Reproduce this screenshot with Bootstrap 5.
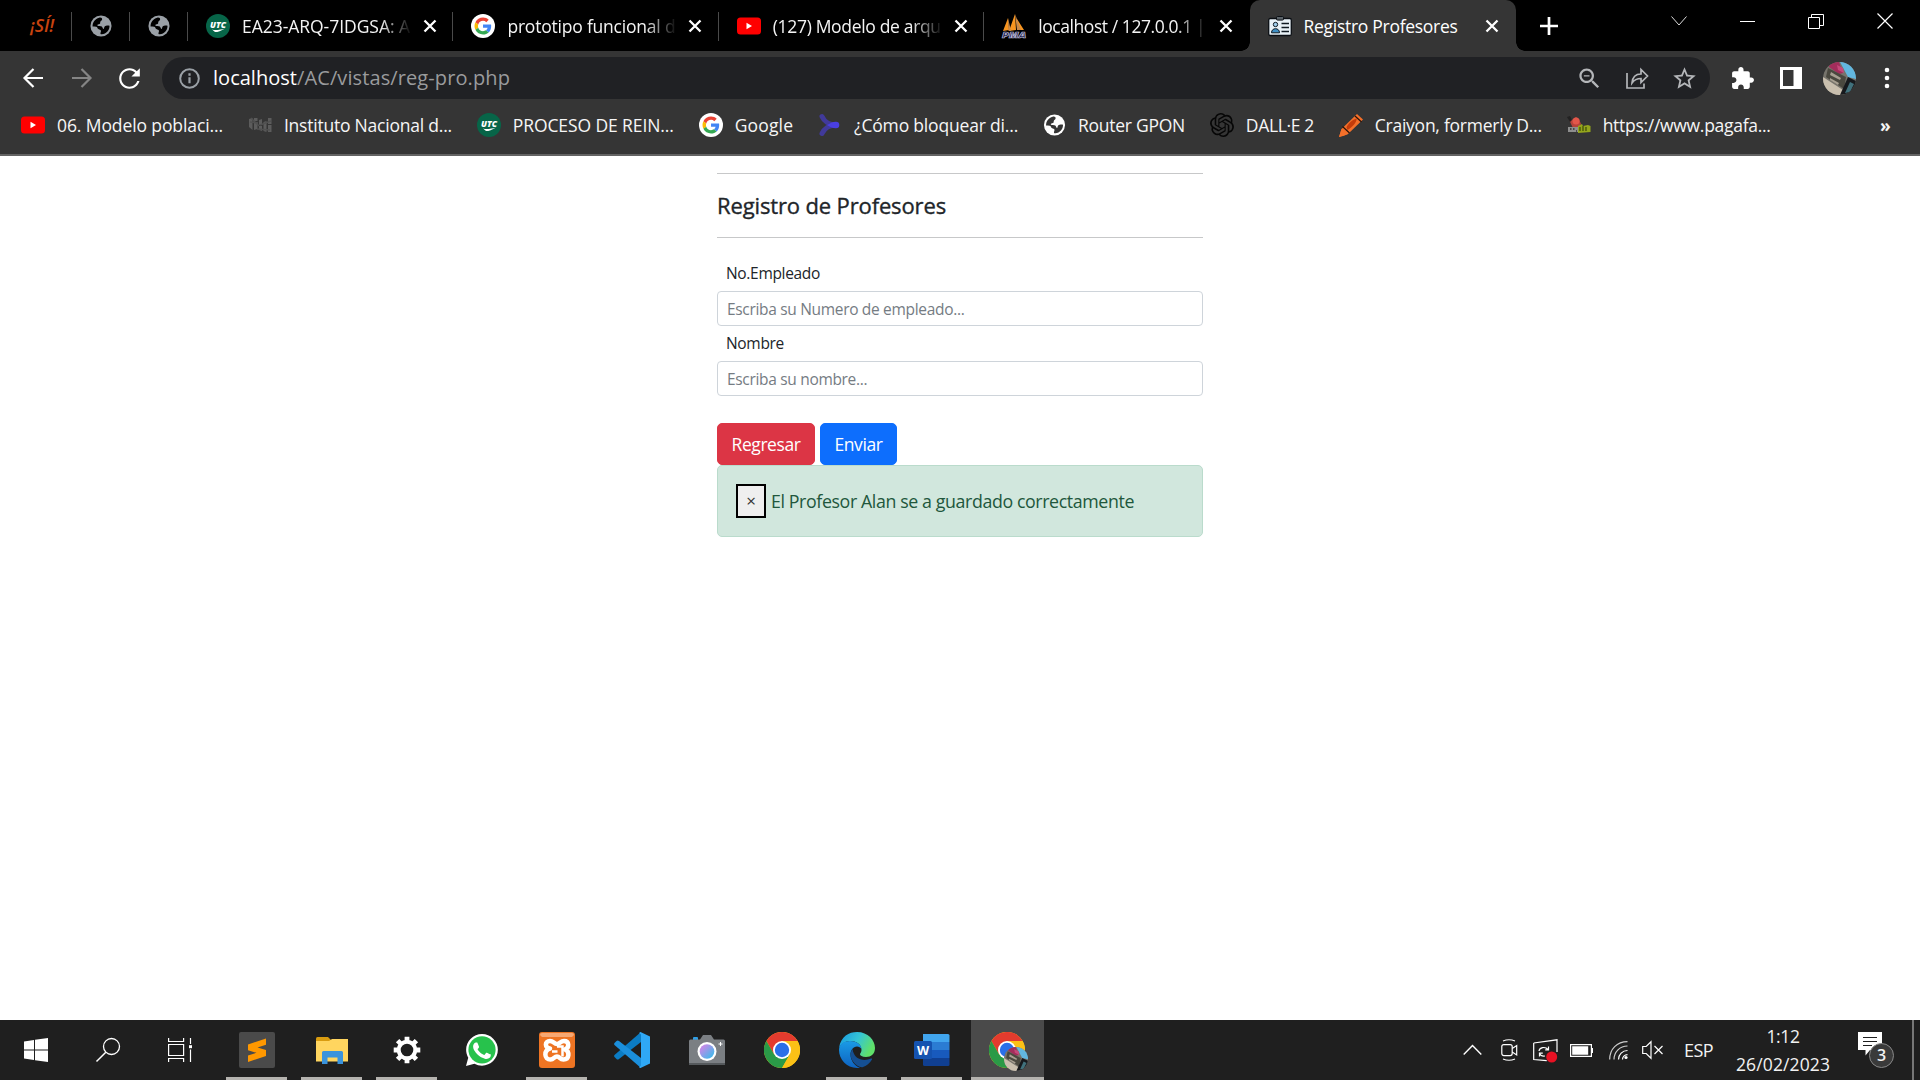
<!DOCTYPE html>
<html lang="es">
<head>
<meta charset="utf-8">
<meta name="viewport" content="width=device-width, initial-scale=1">
<title>Registro Profesores</title>
<link rel="stylesheet" href="https://cdn.jsdelivr.net/npm/bootstrap@5.3.0/dist/css/bootstrap.min.css">
<style>
html{font-size:18px}
body{font-family:"Open Sans","Noto Sans",sans-serif;width:1920px;height:1080px;overflow:hidden;background:#fff}
svg{display:block;flex:none;overflow:visible}
.fit{white-space:nowrap;display:block;flex:none}
/* browser window */
.strip{height:51px;background:#000;color:#f4f4f4;font-size:17.5px}
.pin,.tab-item{height:51px;position:relative;flex:none}
.tab-item{width:265.4px;padding-left:18px}
.pin::after,.tab-item::after{content:"";position:absolute;right:0;top:12px;width:1px;height:29px;background:#4a4a4a}
.tab-item.last::after,.tab-item.current::after{display:none}
.tab-item.current{width:266.500px;background:#353535;border-radius:10px 10px 0 0;color:#fff}
.tab-item.current::before,.curve{content:"";position:absolute;left:-9px;bottom:0;width:9px;height:9px;background:radial-gradient(circle at 0 0,transparent 8.5px,#353535 9px)}
.curve{left:auto;right:-9px;transform:scaleX(-1)}
.clip{width:168px;overflow:hidden;margin:0 13px 0 11px;line-height:30px}
.fade-end{-webkit-mask-image:linear-gradient(90deg,#000 138px,transparent 170px);mask-image:linear-gradient(90deg,#000 138px,transparent 170px)}
.si{font-weight:600;font-style:italic;color:#c8430f;font-size:18px}
.tools{height:54px;background:#353535;padding:0 19px 0 22px}
.omni{width:1548px;height:42px;margin-left:21px;border-radius:21px;background:#202124;padding:0 12px 0 17px}
.url{font-size:20px;line-height:30px;color:#9a9b9d}
.host{color:#fff}
.marks{height:51px;background:#353535;border-bottom:2px solid #636363;padding:0 0 9px 21px;color:#f6f6f6;font-size:17.5px;line-height:26px}
.marks .bm{margin-right:24.900px}
.marks .bm svg{margin-right:12px}
/* page */
.page{height:864px}
.form-col{width:486px}
.form-col hr{margin:17px 0;opacity:.25}
.form-col .head{font-size:22px;font-weight:500;-webkit-text-stroke:.35px #212529;line-height:27px;margin:18px 0 0}
.form-col .form-lab{font-size:15.5px;line-height:24px;padding-left:9px;color:#212529}
.form-col .form-control{height:35px;min-height:0;padding:4px 9px;border-radius:4px;font-size:15.5px;letter-spacing:-.32px;line-height:24px;border-color:#ced4da}
.form-col .form-control::placeholder{color:#757c83}
.form-col .btn{height:42px;font-size:17.5px;line-height:24px;padding:8px 0;border-radius:5px;display:flex;justify-content:center}
.form-col .alert{height:72px;padding:0 18px;border-radius:5px;font-size:17.800px;background:#d1e7dd;border:1px solid #badbcc;color:#21573c}
.dismiss{width:30px;height:34px;border:2px solid #000;background:#efefef;color:#333;padding:0;font-size:17px;line-height:26px}
/* taskbar */
.task{height:60px;background:#1f1f1f;color:#f2f2f2}
.cell{width:72px;height:60px;flex:none}
.app{width:75px;height:60px;flex:none;position:relative}
.app.open::after{content:"";position:absolute;left:7px;right:7px;bottom:0;height:3px;background:#b5b3af}
.app.front{width:73px;margin-left:1.500px;background:#4a4a4a}
.app.front::after{left:0;right:0}
.app.front .avatar{position:absolute;left:33px;top:27px}
.first-app{margin-left:3px}
.tray{height:60px;padding-right:6px}
.tray>*{flex:none}
.clock{font-size:17.500px;line-height:28px;width:94px;margin-left:23px}
.esp{font-size:18px;margin-left:21px}
.notif{position:relative;width:38px;height:36px;margin-left:28px}
.count{position:absolute;left:11px;top:11px;width:25px;height:25px;border:1px solid #888;border-radius:50%;background:#3a3a3a;font-size:16px;font-weight:600;line-height:23px;text-align:center}
.peek{width:2px;height:60px;background:#777;margin-left:16px}
</style>
<script src="https://cdn.jsdelivr.net/npm/bootstrap@5.3.0/dist/js/bootstrap.bundle.min.js"></script>
</head>
<body class="d-flex flex-column">
<svg width="0" height="0" class="position-absolute" aria-hidden="true">
<defs>
<symbol id="globe" viewBox="0 0 24 24"><circle cx="12" cy="12" r="11.500" fill="currentColor"/><path fill="var(--hole)" d="M2.800 12.500C2.600 8 5.500 4 10 2.900c2.500-.4 3.400.8 3.200 2.100-.2 1.400-1.700 1.300-2 2.500-.3 1.300.4 1.600-1 2.300-1 .5-2.300.3-2.200 1.500.1.900 1.100.8 2.200.8 2.600.1 3.300.8 3.600 2.200.3 1.300 1.500 1 1.600-.2.100-1.500.8-2.300 2.200-2.500 1.300-.2 2.500-.2 3.700.1.100 4.800-3.300 8.900-8.500 9.400-1.300 0-1.600-.8-1.300-1.800.4-1.300.8-1.700.2-2.600-.7-1-2.600-.9-3.300-2-.5-.8-.2-1.700-1.700-2-1.500-.2-2.700-.1-3.900-.2z"/></symbol>
<symbol id="utc" viewBox="0 0 24 24"><circle cx="12" cy="12" r="12" fill="#076548"/><text x="4" y="13.500" font-family="Open Sans,sans-serif" font-size="9.500" font-weight="800" font-style="italic" fill="#fff" textLength="16" lengthAdjust="spacingAndGlyphs">UTC</text><path d="M6 15.500c3 1 8 .5 13-1-4 2.500-8 3.800-10 3.600z" fill="#fff"/></symbol>
<symbol id="goog" viewBox="0 0 24 24"><circle cx="12" cy="12" r="12" fill="#fff"/><g transform="translate(3.500 3.500) scale(.355)"><path fill="#EA4335" d="M24 9.500c3.540 0 6.710 1.220 9.210 3.600l6.850-6.850C35.900 2.380 30.470 0 24 0 14.620 0 6.510 5.380 2.560 13.220l7.980 6.190C12.430 13.720 17.740 9.500 24 9.500z"/><path fill="#4285F4" d="M46.980 24.550c0-1.570-.15-3.090-.38-4.550H24v9.020h12.940c-.58 2.960-2.260 5.480-4.780 7.180l7.730 6c4.510-4.180 7.090-10.360 7.090-17.650z"/><path fill="#FBBC05" d="M10.530 28.590c-.48-1.450-.76-2.990-.76-4.590s.27-3.140.76-4.590l-7.980-6.190C.92 16.460 0 20.120 0 24c0 3.880.92 7.540 2.560 10.780l7.970-6.190z"/><path fill="#34A853" d="M24 48c6.480 0 11.930-2.130 15.890-5.810l-7.730-6c-2.150 1.450-4.920 2.300-8.160 2.300-6.260 0-11.570-4.220-13.470-9.910l-7.980 6.190C6.510 42.620 14.620 48 24 48z"/></g></symbol>
<symbol id="yt" viewBox="0 0 24 24"><rect y="3.500" width="24" height="17" rx="3.500" fill="#f00"/><path d="M9.500 8.800v6.400l5.500-3.200z" fill="#fff"/></symbol>
<symbol id="shut" viewBox="0 0 14 14"><path d="M1.500 1.500l11 11m0-11l-11 11" stroke="#fff" stroke-width="2.300"/></symbol>
<symbol id="chrome" viewBox="0 0 36 36"><circle cx="18" cy="18" r="18" fill="#fbc116"/><path d="M18 9H33.600A18 18 0 0 0 2.400 9L10.200 22.500z" fill="#e33b2e"/><path d="M2.400 9A18 18 0 0 0 18 36L25.800 22.500H10.200z" fill="#2a9a47"/><path d="M33.600 9H18l7.800 13.500L18 36A18 18 0 0 0 33.600 9z" fill="#fbc116"/><circle cx="18" cy="18" r="9" fill="#fff"/><circle cx="18" cy="18" r="7.200" fill="#2a6fe8"/></symbol>
<symbol id="face" viewBox="0 0 33 33"><clipPath id="fc"><circle cx="16.500" cy="16.500" r="16.500"/></clipPath><g clip-path="url(#fc)"><path fill="#77746c" d="M0 0h33v33H0z"/><path fill="#62b7df" d="M17 0h16v17l-8-2z"/><path fill="#a32d5b" d="M7 0h9l4 11-4 1-10-7z"/><path fill="#c6487a" d="M14 3l6 3 1 5-6-3z"/><path fill="#4a483f" d="M5 6l18 9-2 12L3 15z"/><path fill="#a79f91" d="M8 10l10 6-1 2-10-5zM7 16l9 5-1 2-8-5z"/><path fill="#c9bfae" d="M0 15l20 13-2 5H4L0 25z"/><path fill="#17191d" d="M25 15l8 4v12l-16 2z"/><path fill="#41717c" d="M27 20l4 2-4 8-5 1z"/></g></symbol>
</defs>
</svg>

<header>
<div class="strip d-flex align-items-center" style="--hole:#000">
  <div class="pin d-flex align-items-center" style="width:72px;padding-left:30px"><span class="fit si" data-w="24">¡SÍ!</span></div>
  <div class="pin d-flex align-items-center justify-content-center" style="width:58px;color:#9aa0a6"><svg width="22" height="22"><use href="#globe"/></svg></div>
  <div class="pin d-flex align-items-center justify-content-center" style="width:58px;color:#9aa0a6"><svg width="22" height="22"><use href="#globe"/></svg></div>
  <div class="tab-item d-flex align-items-center"><svg width="24" height="24"><use href="#utc"/></svg><div class="clip fade-end" style="margin-left:12px"><span class="fit" data-w="168">EA23-ARQ-7IDGSA: A</span></div><svg width="14" height="14"><use href="#shut"/></svg></div>
  <div class="tab-item d-flex align-items-center"><svg width="24" height="24"><use href="#goog"/></svg><div class="clip fade-end" style="margin-left:12px"><span class="fit" data-w="168">prototipo funcional d</span></div><svg width="14" height="14"><use href="#shut"/></svg></div>
  <div class="tab-item d-flex align-items-center"><svg width="24" height="24"><use href="#yt"/></svg><div class="clip fade-end" style="margin-left:12px"><span class="fit" data-w="168">(127) Modelo de arqu</span></div><svg width="14" height="14"><use href="#shut"/></svg></div>
  <div class="tab-item last d-flex align-items-center"><svg width="24" height="24" viewBox="0 0 24 24"><path d="M1 17L6 4l1 12zM7 17L13 0l1 16zM15 16V5l7 11z" fill="#f79520"/><path d="M6 4l3 13H6.500zM13 0l6 16h-4z" fill="#c98a4a"/><text x="0" y="23.500" font-family="Open Sans,sans-serif" font-size="9" font-weight="800" font-style="italic" fill="#20204a" stroke="#b9b9d6" stroke-width=".7" textLength="24" lengthAdjust="spacingAndGlyphs">PMA</text></svg><div class="clip fade-end" style="margin-left:12px"><span class="fit" data-w="167">localhost / 127.0.0.1 |</span></div><svg width="14" height="14"><use href="#shut"/></svg></div>
  <div class="tab-item current d-flex align-items-center"><svg width="24" height="24" viewBox="0 0 24 24"><rect x=".7" y="4.500" width="22.600" height="17" rx="1.500" fill="#e9f2f7" stroke="#0b0f14" stroke-width="1.300"/><rect x="8.500" y="2.500" width="7" height="3.600" rx="1" fill="#5a6268" stroke="#0b0f14"/><circle cx="7.500" cy="10.500" r="2.200" fill="#9fcdea" stroke="#101a22"/><path d="M3.500 18.800c0-5.500 8-5.500 8 0z" fill="#3f8fc4" stroke="#101a22"/><path d="M13.500 9.500h7.500M13.500 13.500h7.500M13.500 17.500h7.500" stroke="#101a22" stroke-width="1.500"/></svg><div class="clip" style="margin-left:12px"><span class="fit" data-w="154">Registro Profesores</span></div><svg width="14" height="14"><use href="#shut"/></svg><span class="curve"></span></div>
  <svg width="18" height="18" viewBox="0 0 18 18" style="margin-left:24px"><path d="M9 0v18M0 9h18" stroke="#fff" stroke-width="2.700"/></svg>
  <div class="d-flex align-items-center ms-auto mb-2" style="padding-right:27px;gap:53px">
    <svg width="16" height="18" viewBox="0 0 16 18"><path d="M.5 4.500L8 13l7.500-8.500" fill="none" stroke="#ddd"/></svg>
    <svg width="15" height="18" viewBox="0 0 15 18"><path d="M0 9.500h15" stroke="#fff"/></svg>
    <svg width="16" height="18" viewBox="0 0 16 18"><path d="M.5 5.500h11v11h-11zM3.500 5.500v-3h12v11h-4" fill="none" stroke="#fff"/></svg>
    <svg width="16" height="18" viewBox="0 0 16 18"><path d="M.5 1.500l15 15m0-15l-15 15" stroke="#fff" stroke-width="1.200"/></svg>
  </div>
</div>

<div class="tools d-flex align-items-center">
  <svg width="22" height="22" viewBox="0 0 22 22"><path d="M21 11H3M11.500 2L2.500 11l9 9" fill="none" stroke="#fff" stroke-width="2.200"/></svg>
  <svg width="22" height="22" viewBox="0 0 22 22" style="margin-left:27px"><path d="M1 11h18M10.500 2l9 9-9 9" fill="none" stroke="#858585" stroke-width="2.200"/></svg>
  <svg width="31" height="31" viewBox="0 0 24 24" style="margin-left:21px;margin-right:-4px"><path fill="#fff" d="M17.650 6.350C16.200 4.900 14.210 4 12 4c-4.420 0-7.990 3.580-7.990 8s3.570 8 7.990 8c3.730 0 6.840-2.550 7.730-6h-1.780c-.82 2.500-3.140 4.300-5.950 4.300-3.500 0-6.300-2.800-6.300-6.300s2.800-6.300 6.300-6.300c1.700 0 3.300.7 4.400 1.880L13.500 10.500H20V4z"/></svg>
  <div class="omni d-flex align-items-center">
    <svg width="21" height="21" viewBox="0 0 21 21"><circle cx="10.500" cy="10.500" r="9.300" fill="none" stroke="#9aa0a6" stroke-width="2"/><path d="M10.500 9.300v6M10.500 5.300v2.400" stroke="#9aa0a6" stroke-width="2.200"/></svg>
    <span class="fit url host" data-w="84" style="margin-left:13px">localhost</span><span class="fit url" data-w="213">/AC/vistas/reg-pro.php</span>
    <svg class="ms-auto" width="27" height="27" viewBox="0 0 24 24"><path fill="#b4b6b9" d="M15.500 14h-.79l-.28-.27C15.410 12.590 16 11.110 16 9.500 16 5.910 13.090 3 9.500 3S3 5.910 3 9.500 5.910 16 9.500 16c1.610 0 3.090-.59 4.230-1.570l.27.28v.79l5 4.990L20.490 19l-4.990-5zm-6 0C7.010 14 5 11.990 5 9.500S7.010 5 9.500 5 14 7.010 14 9.500 11.990 14 9.500 14zM7 9h5v1.300H7z"/></svg>
    <svg width="23" height="22" viewBox="0 0 23 22" style="margin-left:23px"><path d="M1 6v15h17v-4.500M6 16c.5-6 4-9 9-9V2.500l6.500 6.500-6.500 6.500V11.500c-4 0-6.500 1-9 4.500z" fill="none" stroke="#b4b6b9" stroke-width="1.700"/></svg>
    <svg width="27" height="27" viewBox="0 0 24 24" style="margin-left:22px"><path fill="#b4b6b9" d="M22 9.240l-7.190-.62L12 2 9.190 8.630 2 9.240l5.460 4.730L5.820 21 12 17.270 18.180 21l-1.630-7.030L22 9.240zM12 15.400l-3.760 2.270 1-4.280-3.320-2.880 4.380-.38L12 6.100l1.710 4.040 4.380.38-3.320 2.880 1 4.280L12 15.400z"/></svg>
  </div>
  <svg width="25" height="25" viewBox="0 0 24 24" style="margin-left:20px"><path fill="#fff" d="M20.500 11H19V7c0-1.100-.9-2-2-2h-4V3.500C13 2.120 11.880 1 10.500 1S8 2.120 8 3.500V5H4c-1.100 0-1.990.9-1.990 2v3.800H3.500c1.490 0 2.700 1.210 2.700 2.700s-1.210 2.700-2.700 2.700H2V20c0 1.100.9 2 2 2h3.800v-1.500c0-1.490 1.210-2.700 2.700-2.700 1.490 0 2.700 1.210 2.700 2.700V22H17c1.100 0 2-.9 2-2v-4h1.500c1.380 0 2.500-1.120 2.500-2.500S21.880 11 20.500 11z"/></svg>
  <svg width="22" height="22" viewBox="0 0 22 22" style="margin-left:25px"><path fill="#fff" fill-rule="evenodd" d="M0 0h22v22H0zM3 3v16h10.500V3z"/></svg>
  <svg width="33" height="33" style="margin-left:21px"><use href="#face"/></svg>
  <svg width="6" height="22" viewBox="0 0 6 22" style="margin-left:28px"><g fill="#fff"><circle cx="3" cy="3" r="2.300"/><circle cx="3" cy="11" r="2.300"/><circle cx="3" cy="19" r="2.300"/></g></svg>
</div>

<nav class="marks d-flex align-items-center" style="--hole:#353535">
  <div class="bm d-flex align-items-center"><svg width="24" height="24"><use href="#yt"/></svg><span class="fit" data-w="166">06. Modelo poblaci...</span></div>
  <div class="bm d-flex align-items-center"><svg width="24" height="24" viewBox="0 0 24 24"><path d="M1 6l3.500-1v12L1 14zM6 5h3.500v3H6zM6 9h3.500v7L6 17zM11 7l3-1v5l-3 1zM11 13h3v5l-3-1zM15.500 9l3-1v11l-3-1zM20 5h3.500v6H20zM20 12h3.500v7H20z" fill="#5c5c5c"/><path d="M2 9l8 1M9 16l13 1M12 12l11-4M3 5l8 8" stroke="#505050" stroke-width="1.500"/></svg><span class="fit" data-w="168">Instituto Nacional d...</span></div>
  <div class="bm d-flex align-items-center"><svg width="24" height="24"><use href="#utc"/></svg><span class="fit" data-w="161">PROCESO DE REIN...</span></div>
  <div class="bm d-flex align-items-center"><svg width="24" height="24"><use href="#goog"/></svg><span class="fit" data-w="58.500">Google</span></div>
  <div class="bm d-flex align-items-center"><svg width="24" height="24" viewBox="0 0 24 24"><path d="M4 3.500c2 4.500 7 8.500 14 8.500-7 0-12 4-14 8.500" fill="none" stroke="#413a9a" stroke-width="5" stroke-linecap="round"/><path d="M9 12c3-1.500 5-3.300 9-3.300a3.300 3.300 0 0 1 0 6.600c-4 0-6-1.800-9-3.300z" fill="#4a3fe0"/></svg><span class="fit" data-w="164">¿Cómo bloquear di...</span></div>
  <div class="bm d-flex align-items-center"><svg width="23" height="22" class="text-white"><use href="#globe"/></svg><span class="fit" data-w="107">Router GPON</span></div>
  <div class="bm d-flex align-items-center"><svg width="24" height="24" viewBox="0 0 24 24"><path fill="#060606" d="M22.2819 9.8211a5.9847 5.9847 0 0 0-.5157-4.9108 6.0462 6.0462 0 0 0-6.5098-2.9A6.0651 6.0651 0 0 0 4.9807 4.1818a5.9847 5.9847 0 0 0-3.9977 2.9 6.0462 6.0462 0 0 0 .7427 7.0966 5.98 5.98 0 0 0 .511 4.9107 6.051 6.051 0 0 0 6.5146 2.9001A5.9847 5.9847 0 0 0 13.2599 24a6.0557 6.0557 0 0 0 5.7718-4.2058 5.9894 5.9894 0 0 0 3.9977-2.9001 6.0557 6.0557 0 0 0-.7475-7.0729zm-9.022 12.6081a4.4755 4.4755 0 0 1-2.8764-1.0408l.1419-.0804 4.7783-2.7582a.7948.7948 0 0 0 .3927-.6813v-6.7369l2.02 1.1686a.071.071 0 0 1 .038.052v5.5826a4.504 4.504 0 0 1-4.4945 4.4944zm-9.6607-4.1254a4.4708 4.4708 0 0 1-.5346-3.0137l.142.0852 4.783 2.7582a.7712.7712 0 0 0 .7806 0l5.8428-3.3685v2.3324a.0804.0804 0 0 1-.0332.0615L9.74 19.9502a4.4992 4.4992 0 0 1-6.1408-1.6464zM2.3408 7.8956a4.485 4.485 0 0 1 2.3655-1.9728V11.6a.7664.7664 0 0 0 .3879.6765l5.8144 3.3543-2.0201 1.1685a.0757.0757 0 0 1-.071 0l-4.8303-2.7865A4.504 4.504 0 0 1 2.3408 7.872zm16.5963 3.8558L13.1038 8.364 15.1192 7.2a.0757.0757 0 0 1 .071 0l4.8303 2.7913a4.4944 4.4944 0 0 1-.6765 8.1042v-5.6772a.79.79 0 0 0-.407-.667zm2.0107-3.0231l-.142-.0852-4.7735-2.7818a.7759.7759 0 0 0-.7854 0L9.409 9.2297V6.8974a.0662.0662 0 0 1 .0284-.0615l4.8303-2.7866a4.4992 4.4992 0 0 1 6.6802 4.66zM8.3065 12.863l-2.02-1.1638a.0804.0804 0 0 1-.038-.0567V6.0742a4.4992 4.4992 0 0 1 7.3757-3.4537l-.142.0805L8.704 5.459a.7948.7948 0 0 0-.3927.6813zm1.0976-2.3654l2.602-1.4998 2.6069 1.4998v2.9994l-2.5974 1.4997-2.6067-1.4997Z"/></svg><span class="fit" data-w="68">DALL·E 2</span></div>
  <div class="bm d-flex align-items-center"><svg width="24" height="24" viewBox="0 0 24 24"><path d="M0 24l2.500-8L18 1l6 5.500L9 21z" fill="#f4702a"/><path d="M2.500 16L9 21l-4 1.800L0 24z" fill="#f4702a"/><path d="M7.500 14.500C8 11.500 14 6 17.500 5.500c1 3-5 9.500-9 11.500z" fill="#c43c0b"/><path d="M3.500 13.500L10.500 20M16 3l6.500 6" stroke="#2a1207" stroke-width="1.200"/></svg><span class="fit" data-w="167">Craiyon, formerly D...</span></div>
  <div class="bm d-flex align-items-center"><svg width="24" height="24" viewBox="0 0 24 24"><path d="M1 4l4 3 4-3 3 2 2 5-3 5-5-1-2-4z" fill="#b8423a"/><path d="M0 4l3-1 2 4-2 2zM6 7l3 1-1 3z" fill="#222"/><circle cx="9" cy="8" r="3.500" fill="#e2574a"/><path d="M1 14h10v5H1z" fill="#8e8e8e"/><path d="M3 16h1.500M6 16h1.500M9 18h1" stroke="#333" stroke-width="1.500"/><path d="M11 13l4-2 1 2 5-1 2.500 1v6L11 20z" fill="#94a51c"/><path d="M13 14v4M16 13v5M19 14v4" stroke="#41500b" stroke-width="1.300"/></svg><span class="fit" data-w="168">https://www.pagafa...</span></div>
  <span class="fit ms-auto fw-bold" data-w="11" style="margin-right:29px">»</span>
</nav>
</header>

<main class="page">
<form class="form-col mx-auto">
  <hr>
  <h5 class="head"><span class="fit" data-w="229">Registro de Profesores</span></h5>
  <hr style="margin:18px 0 23px">
  <label class="form-lab d-block" for="emp"><span class="fit" data-w="94">No.Empleado</span></label>
  <input class="form-control" id="emp" placeholder="Escriba su Numero de empleado..." style="margin-top:6px">
  <label class="form-lab d-block" for="nom" style="margin-top:5px"><span class="fit" data-w="58">Nombre</span></label>
  <input class="form-control" id="nom" placeholder="Escriba su nombre..." style="margin-top:6px">
  <div class="d-flex" style="margin-top:27px;gap:5px">
    <a class="btn btn-danger" style="width:98px"><span class="fit" data-w="69">Regresar</span></a>
    <button type="button" class="btn btn-primary" style="width:77px"><span class="fit" data-w="48">Enviar</span></button>
  </div>
  <div class="alert alert-success d-flex align-items-center mb-0" role="alert">
    <button type="button" class="dismiss">×</button>
    <span class="fit" data-w="363" style="margin-left:5px">El Profesor Alan se a guardado correctamente</span>
  </div>
</form>
</main>

<footer class="task d-flex align-items-center">
  <div class="cell d-flex align-items-center justify-content-center"><svg width="24" height="24" viewBox="0 0 24 24"><path fill="#fff" d="M0 3.400L10 2v9.500H0zM11 1.800L24 0v11.500H11zM0 12.500h10V22L0 20.600zM11 12.500h13V24L11 22.200z"/></svg></div>
  <div class="cell d-flex align-items-center justify-content-center"><svg width="24" height="24" viewBox="0 0 24 24"><circle cx="15.500" cy="8.500" r="8" fill="none" stroke="#fff" stroke-width="1.300"/><path d="M9.800 14.200L.5 23.500" stroke="#fff" stroke-width="1.500"/></svg></div>
  <div class="cell d-flex align-items-center justify-content-center"><svg width="24" height="24" viewBox="0 0 24 24"><path d="M.6 6.500h15v11H.6zM.6 0v3.500h15V0M.6 24v-3.500h15V24M22.500 0v6M22.500 11.500V24" fill="none" stroke="#fff" stroke-width="1.200"/><path fill="#fff" d="M21 7.200h3v3h-3z"/></svg></div>
  <div class="app open first-app d-flex align-items-center justify-content-center"><svg width="36" height="36" viewBox="0 0 36 36"><rect width="36" height="36" rx="2" fill="#4a4a4a"/><path d="M9 12.500L27 6.500v6.300L18.500 15.500 27 18v6L9 30v-6.500l8.500-2.700L9 18.300z" fill="#ff9800"/></svg></div>
  <div class="app open d-flex align-items-center justify-content-center"><svg width="32" height="27" viewBox="0 0 32 27"><path d="M0 1.500Q0 0 1.500 0H12l3 3v5H0z" fill="#d99c10"/><path d="M0 4h13l3-2h16v22.500H0z" fill="#ffd55f"/><path d="M6 27V15.500q0-1.500 1.500-1.500h18q1.500 0 1.500 1.500V27h-5.500v-6.500h-10V27z" fill="#3a93dc"/></svg></div>
  <div class="app open d-flex align-items-center justify-content-center"><svg width="28" height="28" viewBox="0 0 28 28"><circle cx="14" cy="14" r="8.300" fill="none" stroke="#fff" stroke-width="4"/><g stroke="#fff" stroke-width="4.800"><path id="tooth" d="M14 .7V5M14 23v4.300"/><use href="#tooth" transform="rotate(45 14 14)"/><use href="#tooth" transform="rotate(90 14 14)"/><use href="#tooth" transform="rotate(135 14 14)"/></g></svg></div>
  <div class="app d-flex align-items-center justify-content-center"><svg width="32" height="32" viewBox="0 0 16 16"><path fill="#fff" d="M13.601 2.326A7.854 7.854 0 0 0 7.994 0C3.627 0 .068 3.558.064 7.926c0 1.399.366 2.760 1.057 3.965L0 16l4.204-1.102a7.933 7.933 0 0 0 3.790.965h.004c4.368 0 7.926-3.558 7.930-7.930A7.898 7.898 0 0 0 13.600 2.326z"/><circle cx="8" cy="7.930" r="6.800" fill="#27c24c"/><path fill="#fff" transform="translate(-.8 -.8) scale(1.100)" d="M11.594 9.900c-.197-.099-1.170-.578-1.353-.646-.182-.065-.315-.099-.445.099-.133.197-.513.646-.627.775-.114.133-.232.148-.43.05-.197-.1-.836-.308-1.592-.985-.59-.525-.985-1.175-1.103-1.372-.114-.198-.011-.304.088-.403.087-.088.197-.232.296-.346.1-.114.133-.198.198-.33.065-.134.034-.248-.015-.347-.05-.099-.445-1.076-.612-1.470-.16-.389-.323-.335-.445-.34-.114-.007-.247-.007-.38-.007a.729.729 0 0 0-.529.247c-.182.198-.691.677-.691 1.654 0 .977.710 1.916.810 2.049.098.133 1.394 2.132 3.383 2.992.470.205.840.326 1.129.418.475.152.904.129 1.246.080.380-.058 1.171-.48 1.338-.943.164-.464.164-.86.114-.993-.05-.133-.182-.182-.38-.28z"/></svg></div>
  <div class="app open d-flex align-items-center justify-content-center"><svg width="36" height="36" viewBox="0 0 36 36"><rect width="36" height="36" rx="3" fill="#ee7423"/><path d="M1 3q0-2 2-2h30q2 0 2 2l-2 2H3z" fill="#f7a873"/><g fill="none" stroke="#fff" stroke-width="4.500" stroke-linecap="round" stroke-linejoin="round"><path d="M11 16.500C5.500 16 5.500 9 11 9c3.500 0 4 3 7 3s3.500-3 7-3c5.500 0 5.500 7 1 8.500 5 2 4.500 10-1.500 10-4 0-3.500-3-6.500-3s-3 3-6.500 3c-6.500 0-7-9-.5-11"/></g><path d="M13 19.500h5.500M18 14.500h5.500v10" fill="none" stroke="#fff" stroke-width="2.500"/></svg></div>
  <div class="app d-flex align-items-center justify-content-center"><svg width="36" height="36" viewBox="0 0 36 36"><path d="M27 0v10L5 27q-1.500 1-2.500 0L.5 25q-1-1 0-2z" fill="#0b7cc4"/><path d="M.5 13q-1-1 0-2l2-2q1-1 2.500 0l22 17v10z" fill="#1b8fdc"/><path d="M26.500 0L36 4.500v27L26.500 36q-1 0-1.500-1l2-1.500v-31L25 1z" fill="#2fa8f5"/></svg></div>
  <div class="app d-flex align-items-center justify-content-center"><svg width="36" height="30" viewBox="0 0 36 30"><linearGradient id="lens" x1="0" y1="0" x2="1" y2="1"><stop offset=".2" stop-color="#c08be8"/><stop offset=".8" stop-color="#4fb4ea"/></linearGradient><path d="M4 5V3q0-1 1-1h3q1 0 1 1v2z" fill="#2f9fe6"/><path d="M0 6q0-1.500 1.500-1.500H11L14 0h8l3 4.500h9.500Q36 4.500 36 6v24H0z" fill="#7b7f83"/><path d="M0 28h36v2H0z" fill="#55595c"/><circle cx="18" cy="16.500" r="9.500" fill="#fff"/><circle cx="18" cy="16.500" r="7.300" fill="url(#lens)"/><path d="M31.500 7v4M29.500 9h4" stroke="#fff" stroke-width="1"/></svg></div>
  <div class="app d-flex align-items-center justify-content-center"><svg width="36" height="36"><use href="#chrome"/></svg></div>
  <div class="app open d-flex align-items-center justify-content-center"><svg width="36" height="36" viewBox="0 0 36 36"><linearGradient id="ea" x1="0" y1="0" x2="1" y2=".4"><stop offset=".1" stop-color="#1b9fe0"/><stop offset=".55" stop-color="#35c5d6"/><stop offset="1" stop-color="#5fe06a"/></linearGradient><linearGradient id="eb" x1="0" y1="0" x2="0" y2="1"><stop offset="0" stop-color="#1a9be6"/><stop offset="1" stop-color="#0e62c0"/></linearGradient><path d="M0 16C2 4 10 0 18 0c11 0 18 8 18 16 0 6-4 9-9 9-4 0-6-1.500-6-2.700 0-1 1.500-2 1.500-4.300C22.500 12 17 9 11 9 6 9 2 12 0 16z" fill="url(#ea)"/><path d="M0 18C0 12 5 9 11 9c7 0 11.500 4 11.500 8-1-1.500-2.500-2.500-4.500-2.500-4 0-6.500 4-6.500 8 0 6 4 11.500 9.500 13.200C9 37.500 0 28 0 18z" fill="url(#eb)"/><path d="M13.500 17c-3 4-2 9 .5 12.500s6 6 9.500 5.700c4-1 7.500-4 9.500-7.700.4-.9-.3-1.200-1-.9C25 29.500 15 28 13.500 17z" fill="#154f92"/></svg></div>
  <div class="app open d-flex align-items-center justify-content-center"><svg width="36" height="32" viewBox="0 0 36 32"><path d="M9 0h25q1.500 0 1.500 1.500V8H9z" fill="#41a5ee"/><path d="M9 8h26.500v8H9z" fill="#2b7cd3"/><path d="M9 16h26.500v8H9z" fill="#185abd"/><path d="M9 24h26.500v6.500Q35.500 32 34 32H10.500Q9 32 9 30.500z" fill="#103f91"/><rect y="7" width="18" height="18" rx="1.500" fill="#1553b0"/><text x="9" y="20.500" text-anchor="middle" font-family="Open Sans,sans-serif" font-size="12.500" font-weight="700" fill="#fff">W</text></svg></div>
  <div class="app open front d-flex align-items-center justify-content-center"><svg width="36" height="36"><use href="#chrome"/></svg><svg class="avatar" width="24" height="24"><use href="#face"/></svg></div>

  <div class="tray d-flex align-items-center ms-auto">
    <svg width="19" height="12" viewBox="0 0 19 12"><path d="M.7 10.500l8.800-9 8.800 9" fill="none" stroke="#fff" stroke-width="1.400"/></svg>
    <svg width="17" height="22" viewBox="0 0 17 22" style="margin-left:19px"><g fill="none" stroke="#fff" stroke-width="1.200"><rect x=".8" y="5.600" width="10.400" height="11" rx="2"/><path d="M11.200 9.500l4.500-3v9.500l-4.500-3M2 2q6-2.500 12 0M2 20q6 2.500 12 0"/></g></svg>
    <svg width="25" height="23" viewBox="0 0 25 23" style="margin-left:15px"><g fill="none" stroke="#fff" stroke-width="1.200"><path d="M.7 4L24 .8V13M.7 4v16.500l13 1.200"/><path d="M6 12c.5-3.500 6-5 9-1.500M15.500 7.500v3.300h-3.300M6.500 17.500v-3.300h3.300M6.500 14.500c1 2 3 3 5.500 2.500"/></g><circle cx="18.700" cy="18" r="5.500" fill="#e81123"/></svg>
    <svg width="23" height="13" viewBox="0 0 23 13" style="margin-left:12px"><path d="M.6.600h20.800v11.800H.6z" fill="none" stroke="#fff" stroke-width="1.200"/><path d="M2.200 2.200h16v8.600h-16zM21.500 4H23v5h-1.500z" fill="#fff"/></svg>
    <svg width="19" height="19" viewBox="0 0 19 19" style="margin-left:16px"><g fill="none" stroke="#ccc" stroke-width="1.200"><path d="M.7 18.500C.7 8 8 .7 18.500.7M5 18.500C5 11 11 5 18.500 5"/><path stroke="#fff" d="M9.500 18.500c0-5 4-9 9-9M13.500 18.500c0-2.500 2-4.800 5-4.800"/></g><circle cx="17" cy="16.500" r="1.600" fill="#fff"/></svg>
    <svg width="21" height="18" viewBox="0 0 21 18" style="margin-left:14px"><path d="M.7 5.500h3.500L9 .8v16.400l-4.800-4.700H.7zM12.500 5l8 8m0-8l-8 8" fill="none" stroke="#fff" stroke-width="1.200"/></svg>
    <span class="fit esp" data-w="29">ESP</span>
    <div class="clock d-flex flex-column align-items-center"><span class="fit" data-w="33">1:12</span><span class="fit" data-w="94">26/02/2023</span></div>
    <div class="notif"><svg width="24" height="24" viewBox="0 0 24 24"><path d="M0 0h24v18H12l-4.500 5.500V18H0z" fill="#fff"/><path d="M5 5.500h14M5 9.500h14M5 13.500h9" stroke="#1f1f1f" stroke-width="1.200"/></svg><span class="count">3</span></div>
    <div class="peek"></div>
  </div>
</footer>
<script>
// Track each label so that it fills the width given in data-w.
document.querySelectorAll('.fit').forEach(el => {
  const r = document.createRange();
  r.selectNodeContents(el);
  const w = +el.dataset.w, n = el.textContent.length;
  el.style.letterSpacing = (w - r.getBoundingClientRect().width) / n + 'px';
  el.style.width = w + 'px';
});
</script>
</body>
</html>
